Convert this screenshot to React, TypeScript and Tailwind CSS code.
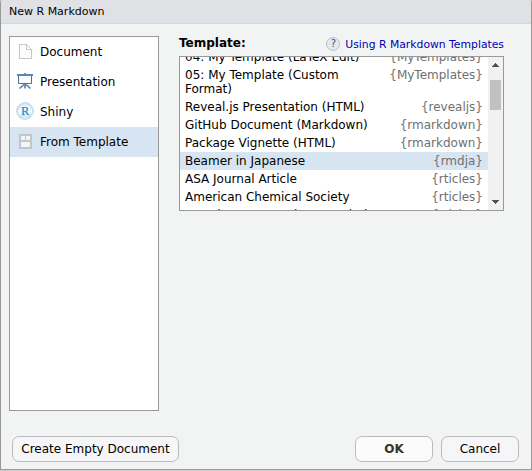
import React from "react";

const templates: { name: string; pkg: string; selected?: boolean }[] = [
  { name: "04: My Template (LaTeX Edit)", pkg: "{MyTemplates}" },
  { name: "05: My Template (Custom Format)", pkg: "{MyTemplates}" },
  { name: "Reveal.js Presentation (HTML)", pkg: "{revealjs}" },
  { name: "GitHub Document (Markdown)", pkg: "{rmarkdown}" },
  { name: "Package Vignette (HTML)", pkg: "{rmarkdown}" },
  { name: "Beamer in Japanese", pkg: "{rmdja}", selected: true },
  { name: "ASA Journal Article", pkg: "{rticles}" },
  { name: "American Chemical Society", pkg: "{rticles}" },
  { name: "American Economics Association", pkg: "{rticles}" },
];

function DocumentIcon() {
  return (
    <svg width="18" height="18" viewBox="0 0 18 18" shapeRendering="crispEdges">
      <path d="M3.500 1.500h7l5 5v9h-12z" fill="#fdfdfd" stroke="#c3c8cc" />
      <path d="M10.500 1.500v5h5" fill="none" stroke="#c3c8cc" />
    </svg>
  );
}

function PresentationIcon() {
  return (
    <svg width="18" height="18" viewBox="0 0 18 18">
      <path d="M8 0h2v1h-2z" fill="#6b8fc0" />
      <path d="M1 1h16v2h-16z" fill="#5d85bb" />
      <path d="M2.500 3v7.500h13v-7.500" fill="#fafafa" stroke="#4f6f9f" />
      <path d="M9 11v4.500M8 11.500l-4.500 4M10 11.500l4.500 4" fill="none" stroke="#5a7cae" strokeWidth="1.600" />
    </svg>
  );
}

function ShinyIcon() {
  return (
    <svg width="18" height="18" viewBox="0 0 18 18" className="relative -top-px">
      <circle cx="9" cy="9" r="8.400" fill="#f4f9fc" stroke="#b4cfe0" strokeDasharray="2 .7" />
      <path d="M4 3l5-2 5 2 3 6-3 6-5 2-5-2-3-6zM4 3l10 0M1 9l3-6M4 15h10M2 6l4-4M16 12l-4 4M2 12l4 4M12 2l4 4" fill="none" stroke="#b9d4e5" strokeWidth=".7" />
      <text x="9.200" y="13" textAnchor="middle" fontFamily="Liberation Serif, serif" fontSize="12.500" fill="#218fc9" stroke="#218fc9" strokeWidth=".25">R</text>
    </svg>
  );
}

function TemplateIcon() {
  return (
    <svg width="18" height="18" viewBox="0 0 18 18" shapeRendering="crispEdges">
      <path d="M3 1h13v15h-13z" fill="#c3c6c8" />
      <path d="M5 3h4v4h-4zM10 3h4v4h-4zM5 9h9v5h-9z" fill="#f3f5f6" />
    </svg>
  );
}

const kinds = [
  { name: "Document", Icon: DocumentIcon },
  { name: "Presentation", Icon: PresentationIcon },
  { name: "Shiny", Icon: ShinyIcon },
  { name: "From Template", Icon: TemplateIcon, selected: true },
];

export default function App() {
  return (
    <div className="h-[471px] w-[532px] bg-[#cfcfcf] pb-px font-['DejaVu_Sans',sans-serif] text-[12px] text-black">
      <div className="flex h-[470px] flex-col overflow-hidden rounded-t-[3px] border border-t-0 border-[#999] bg-[#f2f4f3]">
        <header className="flex h-6 shrink-0 items-center border-b border-[#d3d5d8] bg-[#e0e1e5] pt-px pl-2 text-[11px]">
          New R Markdown
        </header>
        <main className="flex h-[387px] shrink-0 pt-3 pl-2">
          <nav className="h-[375px] w-[150px] border border-[#999] bg-white">
            {kinds.map(({ name, Icon, selected }) => (
              <div key={name} className={`flex h-[30px] items-center gap-[6px] pl-[6px] ${selected ? "bg-[#d6e5f1]" : ""}`}>
                <Icon />
                <span>{name}</span>
              </div>
            ))}
          </nav>
          <section className="ml-5 w-[325px]">
            <div className="flex h-5 justify-between">
              <span className="leading-[14px] font-bold">Template:</span>
              <span className="flex h-4 items-start gap-[5px] pt-px text-[10.8px] text-[#0000b0]">
                <span className="flex size-[14px] items-center justify-center rounded-full border border-[#b9c3cc] bg-[#e5eaef] text-[10px] leading-[12px] text-[#385374]">?</span>
                <span className="pt-px leading-[14px]">Using R Markdown Templates</span>
              </span>
            </div>
            <div className="flex h-[155px] border border-[#999] bg-white">
              <div className="w-[308px] overflow-hidden">
                <div className="-mt-[9px]">
                  {templates.map((t) => (
                    <div key={t.name} className={`flex justify-between py-[2px] pr-[5px] pl-[5px] leading-[14px] ${t.selected ? "bg-[#d6e5f1]" : ""}`}>
                      <span className={t.name.startsWith("05") ? "max-w-[190px]" : "whitespace-nowrap"}>{t.name}</span>
                      <span className="text-[#707070]">{t.pkg}</span>
                    </div>
                  ))}
                </div>
              </div>
              <div className="flex w-[15px] flex-col items-center bg-[#f1f1f1]">
                <svg width="15" height="23" viewBox="0 0 15 23" shapeRendering="crispEdges">
                  <path d="M7 6h1v1h1v1h1v1h1v1h-7v-1h1v-1h1v-1h1z" fill="#505050" />
                </svg>
                <div className="h-[30px] w-[11px] bg-[#c1c1c1]" />
                <svg className="mt-auto" width="15" height="15" viewBox="0 0 15 15" shapeRendering="crispEdges">
                  <path d="M4 5h7v1h-1v1h-1v1h-1v1h-1v-1h-1v-1h-1v-1h-1z" fill="#505050" />
                </svg>
              </div>
            </div>
          </section>
        </main>
        <footer className="mt-[25px] flex pr-3 pl-[11px]">
          <button className="h-[26px] w-[167px] rounded-[7px] border border-[#bbb] bg-[#f6f6f8]">Create Empty Document</button>
          <button className="ml-auto h-[26px] w-[78px] rounded-[7px] border border-[#bbb] bg-[#fafbfa] font-bold text-[#333]">OK</button>
          <button className="ml-2 h-[26px] w-[78px] rounded-[7px] border border-[#bbb] bg-[#f6f6f8]">Cancel</button>
        </footer>
      </div>
    </div>
  );
}
